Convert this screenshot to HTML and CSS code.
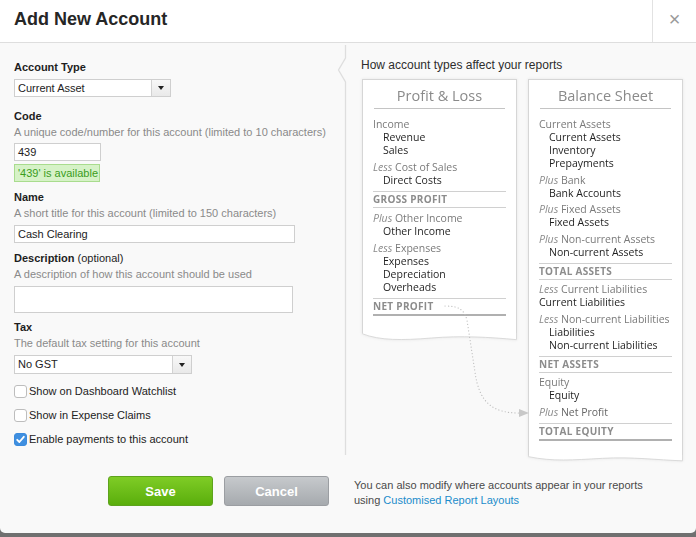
FILE: index.html
```html
<!DOCTYPE html>
<html>
<head>
<meta charset="utf-8">
<title>Add New Account</title>
<link rel="stylesheet" href="styles.css">
</head>
<body>
<div class="modal">
  <header class="modal-header">
    <h1 class="title">Add New Account</h1>
    <div class="close">&times;</div>
  </header>

  <div class="modal-body">
    <div class="form">
      <div class="label">Account Type</div>
      <div class="select sel-type"><span class="sel-text">Current Asset</span><span class="sel-arrow"><span class="tri"></span></span></div>

      <div class="label mt-code">Code</div>
      <div class="help">A unique code/number for this account (limited to 10 characters)</div>
      <div class="input in-code">439</div>
      <div class="avail">'439' is available</div>

      <div class="label mt-name">Name</div>
      <div class="help">A short title for this account (limited to 150 characters)</div>
      <div class="input in-name">Cash Clearing</div>

      <div class="label mt-desc">Description <span class="opt">(optional)</span></div>
      <div class="help">A description of how this account should be used</div>
      <div class="input in-desc"></div>

      <div class="label mt-tax">Tax</div>
      <div class="help">The default tax setting for this account</div>
      <div class="select sel-tax"><span class="sel-text">No GST</span><span class="sel-arrow"><span class="tri"></span></span></div>

      <div class="checks">
        <div class="check"><span class="box"></span><span>Show on Dashboard Watchlist</span></div>
        <div class="check"><span class="box"></span><span>Show in Expense Claims</span></div>
        <div class="check"><span class="box checked"><svg width="13" height="13" viewBox="0 0 13 13"><path d="M3.2 6.8 L5.4 9 L9.8 3.8" fill="none" stroke="#fff" stroke-width="1.8" stroke-linecap="round" stroke-linejoin="round"/></svg></span><span>Enable payments to this account</span></div>
      </div>
    </div>

    <div class="divider">
      <svg width="30" height="412" viewBox="0 0 30 412"><path d="M14.5 0 V13 L7.5 25 L14.5 37 V410" fill="none" stroke="#dedede" stroke-width="1.3"/></svg>
    </div>

    <div class="guide">
      <div class="guide-title">How account types affect your reports</div>
      <div class="cards">
        <div class="card pl">
          <div class="sheet">
            <div class="card-title">Profit &amp; Loss</div>
            <div class="group first">
              <div class="head">Income</div>
              <div class="item">Revenue</div>
              <div class="item">Sales</div>
            </div>
            <div class="group">
              <div class="head"><i>Less</i> Cost of Sales</div>
              <div class="item">Direct Costs</div>
            </div>
            <div class="total">GROSS PROFIT</div>
            <div class="group">
              <div class="head"><i>Plus</i> Other Income</div>
              <div class="item">Other Income</div>
            </div>
            <div class="group">
              <div class="head"><i>Less</i> Expenses</div>
              <div class="item">Expenses</div>
              <div class="item">Depreciation</div>
              <div class="item">Overheads</div>
            </div>
            <div class="total final">NET PROFIT</div>
            <div class="tail pl-tail"></div>
          </div>
          <svg class="wave" viewBox="0 0 156 12" preserveAspectRatio="none"><path d="M0 0 V1 C18 9 40 9 70 6 C100 3 128 5 156 8 V0 Z" fill="#fff"/><path d="M0.5 0 V1 C18 9 40 9 70 6 C100 3 128 5 155.5 8 V0" fill="none" stroke="#d6d6d6"/></svg>
        </div>

        <div class="card bs">
          <div class="sheet">
            <div class="card-title">Balance Sheet</div>
            <div class="group first">
              <div class="head">Current Assets</div>
              <div class="item">Current Assets</div>
              <div class="item">Inventory</div>
              <div class="item">Prepayments</div>
            </div>
            <div class="group">
              <div class="head"><i>Plus</i> Bank</div>
              <div class="item">Bank Accounts</div>
            </div>
            <div class="group">
              <div class="head"><i>Plus</i> Fixed Assets</div>
              <div class="item">Fixed Assets</div>
            </div>
            <div class="group">
              <div class="head"><i>Plus</i> Non-current Assets</div>
              <div class="item">Non-current Assets</div>
            </div>
            <div class="total">TOTAL ASSETS</div>
            <div class="group">
              <div class="head"><i>Less</i> Current Liabilities</div>
              <div class="item flush">Current Liabilities</div>
            </div>
            <div class="group">
              <div class="head"><i>Less</i> Non-current Liabilities</div>
              <div class="item">Liabilities</div>
              <div class="item">Non-current Liabilities</div>
            </div>
            <div class="total">NET ASSETS</div>
            <div class="group">
              <div class="head">Equity</div>
              <div class="item">Equity</div>
            </div>
            <div class="group">
              <div class="head"><i>Plus</i> <span class="np">Net Profit</span></div>
            </div>
            <div class="total final">TOTAL EQUITY</div>
            <div class="tail bs-tail"></div>
          </div>
          <svg class="wave" viewBox="0 0 156 12" preserveAspectRatio="none"><path d="M0 0 V2 C25 8 45 6 75 4 C105 2 130 6 156 7 V0 Z" fill="#fff"/><path d="M0.5 0 V2 C25 8 45 6 75 4 C105 2 130 6 155.5 7 V0" fill="none" stroke="#d6d6d6"/></svg>
        </div>
      </div>
    </div>
  </div>

  <footer class="modal-footer">
    <button class="btn save">Save</button>
    <button class="btn cancel">Cancel</button>
    <p class="note">You can also modify where accounts appear in your reports<br>using <a class="link">Customised Report Layouts</a></p>
  </footer>

  <svg class="connector" width="696" height="537" viewBox="0 0 696 537">
    <path d="M445 306 C458 306 464 309 467 320 L475 372 C479 402 492 413 519 413" fill="none" stroke="#bdbdbd" stroke-width="1.2" stroke-dasharray="0.1 3.2" stroke-linecap="round"/>
    <path d="M519 409 L529 413 L519 417 Z" fill="#c8c8c8"/>
  </svg>
</div>
</body>
</html>
```

FILE: styles.css
```css
* { box-sizing: border-box; }

body {
  margin: 0;
  width: 696px;
  height: 537px;
  overflow: hidden;
  background: #707070;
}

.modal {
  position: relative;
  width: 696px;
  height: 533px;
  background: #f9f9f9;
  border-radius: 0 0 5px 5px;
  font-family: "Liberation Sans", Arial, sans-serif;
  font-size: 11px;
  color: #222;
}

/* header */
.modal-header {
  display: flex;
  height: 43px;
  background: #fff;
  border-bottom: 1px solid #dedede;
}
.title {
  flex: 1;
  margin: 0;
  padding-left: 14px;
  font-size: 18px;
  font-weight: bold;
  line-height: 38px;
  color: #262626;
}
.close {
  width: 44px;
  height: 42px;
  border-left: 1px solid #e2e2e2;
  text-align: center;
  line-height: 38px;
  font-size: 20px;
  color: #9a9a9a;
}

/* body */
.modal-body {
  display: flex;
  height: 417px;
}

.form {
  width: 331px;
  padding: 16px 0 0 14px;
}
.label {
  font-weight: bold;
  font-size: 11px;
  line-height: 16px;
  color: #1e1e1e;
}
.label .opt { font-weight: normal; }
.help {
  line-height: 16px;
  color: #8a8a8a;
}
.mt-code { margin-top: 11px; }
.mt-name { margin-top: 7px; }
.mt-desc { margin-top: 7px; }
.mt-tax { margin-top: 6px; }

.select {
  display: flex;
  height: 18px;
  margin-top: 4px;
  background: #fff;
  border: 1px solid #cfcfcf;
}
.sel-type { width: 157px; }
.sel-tax { width: 178px; height: 19px; }
.sel-text {
  flex: 1;
  padding-left: 3px;
  line-height: 16px;
  font-size: 11px;
}
.sel-tax .sel-text { line-height: 17px; }
.sel-arrow {
  display: flex;
  align-items: center;
  justify-content: center;
  width: 19px;
  border-left: 1px solid #d2d2d2;
  background: linear-gradient(#f8f8f8, #e9e9e9);
}
.tri {
  width: 0;
  height: 0;
  border-left: 3.5px solid transparent;
  border-right: 3.5px solid transparent;
  border-top: 4px solid #222;
}

.input {
  height: 18px;
  margin-top: 3px;
  padding-left: 3px;
  background: #fff;
  border: 1px solid #cfcfcf;
  line-height: 16px;
  font-size: 11px;
}
.in-code { width: 87px; }
.in-name { width: 281px; margin-top: 4px; }
.in-desc { width: 279px; height: 27px; margin-top: 4px; }

.avail {
  width: 86px;
  height: 18px;
  margin-top: 3px;
  padding-left: 3px;
  background: #d6f2c7;
  border: 1px solid #a9dc8e;
  color: #3a9d1d;
  line-height: 16px;
  font-size: 11px;
  white-space: nowrap;
}

.checks { margin-top: 5px; }
.check {
  display: flex;
  align-items: center;
  gap: 2px;
  height: 24px;
  color: #222;
}
.box {
  display: flex;
  width: 13px;
  height: 13px;
  border: 1px solid #bdbdbd;
  border-radius: 3px;
  background: #fff;
}
.box.checked {
  border-color: #3c8bdc;
  background: #3f8fe0;
}
.box.checked svg { margin: -1px; }

/* divider */
.divider {
  width: 30px;
  padding-top: 2px;
}
.divider svg { display: block; }

/* guide */
.guide {
  flex: 1;
  padding-top: 14px;
}
.guide-title {
  line-height: 16px;
  font-size: 12px;
  color: #2d2d2d;
}
.cards {
  display: flex;
  gap: 11px;
  margin-top: 6px;
  padding-left: 1px;
}
.card {
  width: 155px;
  filter: drop-shadow(0 0 1.5px rgba(0, 0, 0, 0.08));
}
.sheet {
  background: #fff;
  border: 1px solid #d6d6d6;
  border-bottom: none;
  padding: 6px 10px 0;
  font-family: "Open Sans", "Liberation Sans", sans-serif;
  font-size: 10.5px;
}
.card-title {
  margin: 0 1px;
  padding-bottom: 2px;
  border-bottom: 1px solid #c4c4c4;
  text-align: center;
  font-size: 14.5px;
  line-height: 20px;
  color: #8a8a8a;
}
.group { margin-top: 4px; }
.bs .group { margin-top: 3.5px; }
.group.first { margin-top: 9px; }
.head {
  line-height: 13px;
  color: #7a7a7a;
  white-space: nowrap;
}
.head i { color: #8a8a8a; }
.head .np { color: #666; }
.item {
  padding-left: 10px;
  line-height: 13px;
  color: #1f1f1f;
  white-space: nowrap;
}
.item.flush { padding-left: 0; }
.total {
  margin-top: 4px;
  border-top: 1px solid #d0d0d0;
  border-bottom: 1px solid #d0d0d0;
  line-height: 15px;
  font-size: 10px;
  font-weight: bold;
  letter-spacing: 0.3px;
  color: #8c8c8c;
}
.total.final {
  border-bottom: 2px solid #b0b0b0;
}
.pl-tail { height: 17px; }
.bs-tail { height: 14px; }

.wave {
  display: block;
  width: 155px;
  height: 10px;
}

/* footer */
.modal-footer {
  display: flex;
  align-items: flex-start;
  padding: 16px 0 0 108px;
}
.btn {
  width: 105px;
  height: 30px;
  padding: 0;
  border-radius: 3px;
  font-family: "Liberation Sans", Arial, sans-serif;
  font-size: 13px;
  font-weight: bold;
  color: #fff;
}
.save {
  background: linear-gradient(#7fcc26, #5aae0c);
  border: 1px solid #5ea31d;
}
.cancel {
  margin-left: 11px;
  background: linear-gradient(#c6c9cc, #a6aaae);
  border: 1px solid #9b9ea2;
}
.note {
  margin: 2px 0 0 25px;
  line-height: 15px;
  font-size: 11px;
  color: #4a4a4a;
}
.link { color: #1b8ccb; }

.connector {
  position: absolute;
  left: 0;
  top: 0;
  pointer-events: none;
}
```
